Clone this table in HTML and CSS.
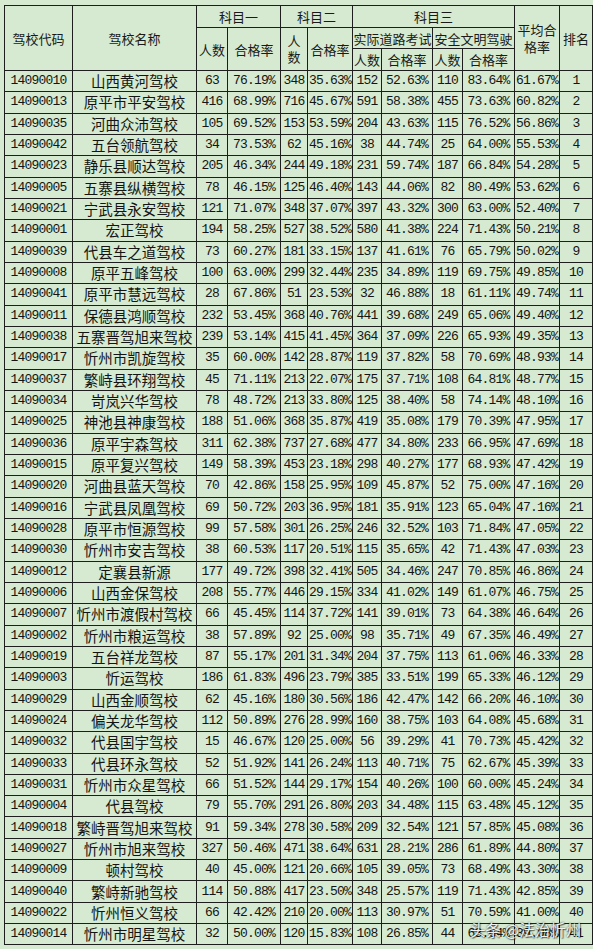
FILE: index.html
```html
<!DOCTYPE html>
<html lang="zh">
<head>
<meta charset="utf-8">
<title>驾校合格率排名</title>
<link rel="stylesheet" href="styles.css">
</head>
<body>
<div class="page">
<table class="grid">
<colgroup>
<col class="c-code"><col class="c-name"><col class="c-n1"><col class="c-r1"><col class="c-n2"><col class="c-r2"><col class="c-n3"><col class="c-r3"><col class="c-n4"><col class="c-r4"><col class="c-avg"><col class="c-rank">
</colgroup>
<thead>
<tr class="h1">
<th rowspan="3">驾校代码</th><th rowspan="3">驾校名称</th><th colspan="2">科目一</th><th colspan="2">科目二</th><th colspan="4">科目三</th><th rowspan="3">平均合<br>格率</th><th rowspan="3">排名</th>
</tr>
<tr class="h2">
<th rowspan="2">人数</th><th rowspan="2">合格率</th><th rowspan="2" class="stack">人<br>数</th><th rowspan="2">合格率</th><th colspan="2">实际道路考试</th><th colspan="2">安全文明驾驶</th>
</tr>
<tr class="h3">
<th>人数</th><th>合格率</th><th>人数</th><th>合格率</th>
</tr>
</thead>
<tbody>
<tr><td>14090010</td><td class="nm">山西黄河驾校</td><td>63</td><td>76.19%</td><td>348</td><td>35.63%</td><td>152</td><td>52.63%</td><td>110</td><td>83.64%</td><td>61.67%</td><td>1</td></tr>
<tr><td>14090013</td><td class="nm">原平市平安驾校</td><td>416</td><td>68.99%</td><td>716</td><td>45.67%</td><td>591</td><td>58.38%</td><td>455</td><td>73.63%</td><td>60.82%</td><td>2</td></tr>
<tr><td>14090035</td><td class="nm">河曲众沛驾校</td><td>105</td><td>69.52%</td><td>153</td><td>53.59%</td><td>204</td><td>43.63%</td><td>115</td><td>76.52%</td><td>56.86%</td><td>3</td></tr>
<tr><td>14090042</td><td class="nm">五台领航驾校</td><td>34</td><td>73.53%</td><td>62</td><td>45.16%</td><td>38</td><td>44.74%</td><td>25</td><td>64.00%</td><td>55.53%</td><td>4</td></tr>
<tr><td>14090023</td><td class="nm">静乐县顺达驾校</td><td>205</td><td>46.34%</td><td>244</td><td>49.18%</td><td>231</td><td>59.74%</td><td>187</td><td>66.84%</td><td>54.28%</td><td>5</td></tr>
<tr><td>14090005</td><td class="nm">五寨县纵横驾校</td><td>78</td><td>46.15%</td><td>125</td><td>46.40%</td><td>143</td><td>44.06%</td><td>82</td><td>80.49%</td><td>53.62%</td><td>6</td></tr>
<tr><td>14090021</td><td class="nm">宁武县永安驾校</td><td>121</td><td>71.07%</td><td>348</td><td>37.07%</td><td>397</td><td>43.32%</td><td>300</td><td>63.00%</td><td>52.40%</td><td>7</td></tr>
<tr><td>14090001</td><td class="nm">宏正驾校</td><td>194</td><td>58.25%</td><td>527</td><td>38.52%</td><td>580</td><td>41.38%</td><td>224</td><td>71.43%</td><td>50.21%</td><td>8</td></tr>
<tr><td>14090039</td><td class="nm">代县车之道驾校</td><td>73</td><td>60.27%</td><td>181</td><td>33.15%</td><td>137</td><td>41.61%</td><td>76</td><td>65.79%</td><td>50.02%</td><td>9</td></tr>
<tr><td>14090008</td><td class="nm">原平五峰驾校</td><td>100</td><td>63.00%</td><td>299</td><td>32.44%</td><td>235</td><td>34.89%</td><td>119</td><td>69.75%</td><td>49.85%</td><td>10</td></tr>
<tr><td>14090041</td><td class="nm">原平市慧远驾校</td><td>28</td><td>67.86%</td><td>51</td><td>23.53%</td><td>32</td><td>46.88%</td><td>18</td><td>61.11%</td><td>49.74%</td><td>11</td></tr>
<tr><td>14090011</td><td class="nm">保德县鸿顺驾校</td><td>232</td><td>53.45%</td><td>368</td><td>40.76%</td><td>441</td><td>39.68%</td><td>249</td><td>65.06%</td><td>49.40%</td><td>12</td></tr>
<tr><td>14090038</td><td class="nm">五寨晋驾旭来驾校</td><td>239</td><td>53.14%</td><td>415</td><td>41.45%</td><td>364</td><td>37.09%</td><td>226</td><td>65.93%</td><td>49.35%</td><td>13</td></tr>
<tr><td>14090017</td><td class="nm">忻州市凯旋驾校</td><td>35</td><td>60.00%</td><td>142</td><td>28.87%</td><td>119</td><td>37.82%</td><td>58</td><td>70.69%</td><td>48.93%</td><td>14</td></tr>
<tr><td>14090037</td><td class="nm">繁峙县环翔驾校</td><td>45</td><td>71.11%</td><td>213</td><td>22.07%</td><td>175</td><td>37.71%</td><td>108</td><td>64.81%</td><td>48.77%</td><td>15</td></tr>
<tr><td>14090034</td><td class="nm">岢岚兴华驾校</td><td>78</td><td>48.72%</td><td>213</td><td>33.80%</td><td>125</td><td>38.40%</td><td>58</td><td>74.14%</td><td>48.10%</td><td>16</td></tr>
<tr><td>14090025</td><td class="nm">神池县神康驾校</td><td>188</td><td>51.06%</td><td>368</td><td>35.87%</td><td>419</td><td>35.08%</td><td>179</td><td>70.39%</td><td>47.95%</td><td>17</td></tr>
<tr><td>14090036</td><td class="nm">原平宇森驾校</td><td>311</td><td>62.38%</td><td>737</td><td>27.68%</td><td>477</td><td>34.80%</td><td>233</td><td>66.95%</td><td>47.69%</td><td>18</td></tr>
<tr><td>14090015</td><td class="nm">原平复兴驾校</td><td>149</td><td>58.39%</td><td>453</td><td>23.18%</td><td>298</td><td>40.27%</td><td>177</td><td>68.93%</td><td>47.42%</td><td>19</td></tr>
<tr><td>14090020</td><td class="nm">河曲县蓝天驾校</td><td>70</td><td>42.86%</td><td>158</td><td>25.95%</td><td>109</td><td>45.87%</td><td>52</td><td>75.00%</td><td>47.16%</td><td>20</td></tr>
<tr><td>14090016</td><td class="nm">宁武县凤凰驾校</td><td>69</td><td>50.72%</td><td>203</td><td>36.95%</td><td>181</td><td>35.91%</td><td>123</td><td>65.04%</td><td>47.16%</td><td>21</td></tr>
<tr><td>14090028</td><td class="nm">原平市恒源驾校</td><td>99</td><td>57.58%</td><td>301</td><td>26.25%</td><td>246</td><td>32.52%</td><td>103</td><td>71.84%</td><td>47.05%</td><td>22</td></tr>
<tr><td>14090030</td><td class="nm">忻州市安吉驾校</td><td>38</td><td>60.53%</td><td>117</td><td>20.51%</td><td>115</td><td>35.65%</td><td>42</td><td>71.43%</td><td>47.03%</td><td>23</td></tr>
<tr><td>14090012</td><td class="nm">定襄县新源</td><td>177</td><td>49.72%</td><td>398</td><td>32.41%</td><td>505</td><td>34.46%</td><td>247</td><td>70.85%</td><td>46.86%</td><td>24</td></tr>
<tr><td>14090006</td><td class="nm">山西金保驾校</td><td>208</td><td>55.77%</td><td>446</td><td>29.15%</td><td>334</td><td>41.02%</td><td>149</td><td>61.07%</td><td>46.75%</td><td>25</td></tr>
<tr><td>14090007</td><td class="nm">忻州市渡假村驾校</td><td>66</td><td>45.45%</td><td>114</td><td>37.72%</td><td>141</td><td>39.01%</td><td>73</td><td>64.38%</td><td>46.64%</td><td>26</td></tr>
<tr><td>14090002</td><td class="nm">忻州市粮运驾校</td><td>38</td><td>57.89%</td><td>92</td><td>25.00%</td><td>98</td><td>35.71%</td><td>49</td><td>67.35%</td><td>46.49%</td><td>27</td></tr>
<tr><td>14090019</td><td class="nm">五台祥龙驾校</td><td>87</td><td>55.17%</td><td>201</td><td>31.34%</td><td>204</td><td>37.75%</td><td>113</td><td>61.06%</td><td>46.33%</td><td>28</td></tr>
<tr><td>14090003</td><td class="nm">忻运驾校</td><td>186</td><td>61.83%</td><td>496</td><td>23.79%</td><td>385</td><td>33.51%</td><td>199</td><td>65.33%</td><td>46.12%</td><td>29</td></tr>
<tr><td>14090029</td><td class="nm">山西金顺驾校</td><td>62</td><td>45.16%</td><td>180</td><td>30.56%</td><td>186</td><td>42.47%</td><td>142</td><td>66.20%</td><td>46.10%</td><td>30</td></tr>
<tr><td>14090024</td><td class="nm">偏关龙华驾校</td><td>112</td><td>50.89%</td><td>276</td><td>28.99%</td><td>160</td><td>38.75%</td><td>103</td><td>64.08%</td><td>45.68%</td><td>31</td></tr>
<tr><td>14090032</td><td class="nm">代县国宇驾校</td><td>15</td><td>46.67%</td><td>120</td><td>25.00%</td><td>56</td><td>39.29%</td><td>41</td><td>70.73%</td><td>45.42%</td><td>32</td></tr>
<tr><td>14090033</td><td class="nm">代县环永驾校</td><td>52</td><td>51.92%</td><td>141</td><td>26.24%</td><td>113</td><td>40.71%</td><td>75</td><td>62.67%</td><td>45.39%</td><td>33</td></tr>
<tr><td>14090031</td><td class="nm">忻州市众星驾校</td><td>66</td><td>51.52%</td><td>144</td><td>29.17%</td><td>154</td><td>40.26%</td><td>100</td><td>60.00%</td><td>45.24%</td><td>34</td></tr>
<tr><td>14090004</td><td class="nm">代县驾校</td><td>79</td><td>55.70%</td><td>291</td><td>26.80%</td><td>203</td><td>34.48%</td><td>115</td><td>63.48%</td><td>45.12%</td><td>35</td></tr>
<tr><td>14090018</td><td class="nm">繁峙晋驾旭来驾校</td><td>91</td><td>59.34%</td><td>278</td><td>30.58%</td><td>209</td><td>32.54%</td><td>121</td><td>57.85%</td><td>45.08%</td><td>36</td></tr>
<tr><td>14090027</td><td class="nm">忻州市旭来驾校</td><td>327</td><td>50.46%</td><td>471</td><td>38.64%</td><td>631</td><td>28.21%</td><td>286</td><td>61.89%</td><td>44.80%</td><td>37</td></tr>
<tr><td>14090009</td><td class="nm">顿村驾校</td><td>40</td><td>45.00%</td><td>121</td><td>20.66%</td><td>105</td><td>39.05%</td><td>73</td><td>68.49%</td><td>43.30%</td><td>38</td></tr>
<tr><td>14090040</td><td class="nm">繁峙新驰驾校</td><td>114</td><td>50.88%</td><td>417</td><td>23.50%</td><td>348</td><td>25.57%</td><td>119</td><td>71.43%</td><td>42.85%</td><td>39</td></tr>
<tr><td>14090022</td><td class="nm">忻州恒义驾校</td><td>66</td><td>42.42%</td><td>210</td><td>20.00%</td><td>113</td><td>30.97%</td><td>51</td><td>70.59%</td><td>41.00%</td><td>40</td></tr>
<tr><td>14090014</td><td class="nm">忻州市明星驾校</td><td>32</td><td>50.00%</td><td>120</td><td>15.83%</td><td>108</td><td>26.85%</td><td>44</td><td>63.64%</td><td>39.08%</td><td>41</td></tr>
</tbody>
</table>
<div class="watermark">头条 @法治忻州</div>
</div>
</body>
</html>
```

FILE: styles.css
```css
html, body {
  margin: 0;
  padding: 0;
  background: #d5ead0;
}

.page {
  position: relative;
  width: 593px;
  height: 949px;
  overflow: hidden;
  padding: 5px 0 0 4px;
  box-sizing: border-box;
}

.grid {
  border-collapse: collapse;
  table-layout: fixed;
  width: 589px;
  color: #141414;
  font-family: "Liberation Mono", "Noto Sans CJK SC", monospace;
}

.c-code { width: 68px; }
.c-name { width: 124px; }
.c-n1 { width: 31px; }
.c-r1 { width: 53px; }
.c-n2 { width: 27px; }
.c-r2 { width: 45px; }
.c-n3 { width: 29px; }
.c-r3 { width: 51px; }
.c-n4 { width: 30px; }
.c-r4 { width: 52px; }
.c-avg { width: 45px; }
.c-rank { width: 33px; }

.grid th,
.grid td {
  border: 1px solid #1e1e1e;
  padding: 0;
  text-align: center;
  vertical-align: middle;
  overflow: visible;
  white-space: nowrap;
}

.grid th {
  font-family: "Noto Sans CJK SC", sans-serif;
  font-weight: normal;
  font-size: 13px;
  line-height: 17px;
  color: #1a1a1a;
}

.grid th.stack {
  line-height: 16px;
}

.h1 { height: 22px; }
.h2 { height: 21px; }
.h3 { height: 22px; }

.grid td {
  height: 20.34px;
  font-size: 13px;
  letter-spacing: -0.8px;
  line-height: 16px;
}

.grid td.nm {
  font-family: "Noto Sans CJK SC", sans-serif;
  font-size: 14.5px;
  letter-spacing: 0;
}

.watermark {
  position: absolute;
  left: 470px;
  top: 918px;
  font-family: "Noto Sans CJK SC", sans-serif;
  font-size: 15.5px;
  color: rgba(255, 255, 255, 0.92);
  text-shadow: 0 0 2px rgba(0, 0, 0, 0.75), 1px 1px 1px rgba(0, 0, 0, 0.5);
  white-space: nowrap;
}
```
